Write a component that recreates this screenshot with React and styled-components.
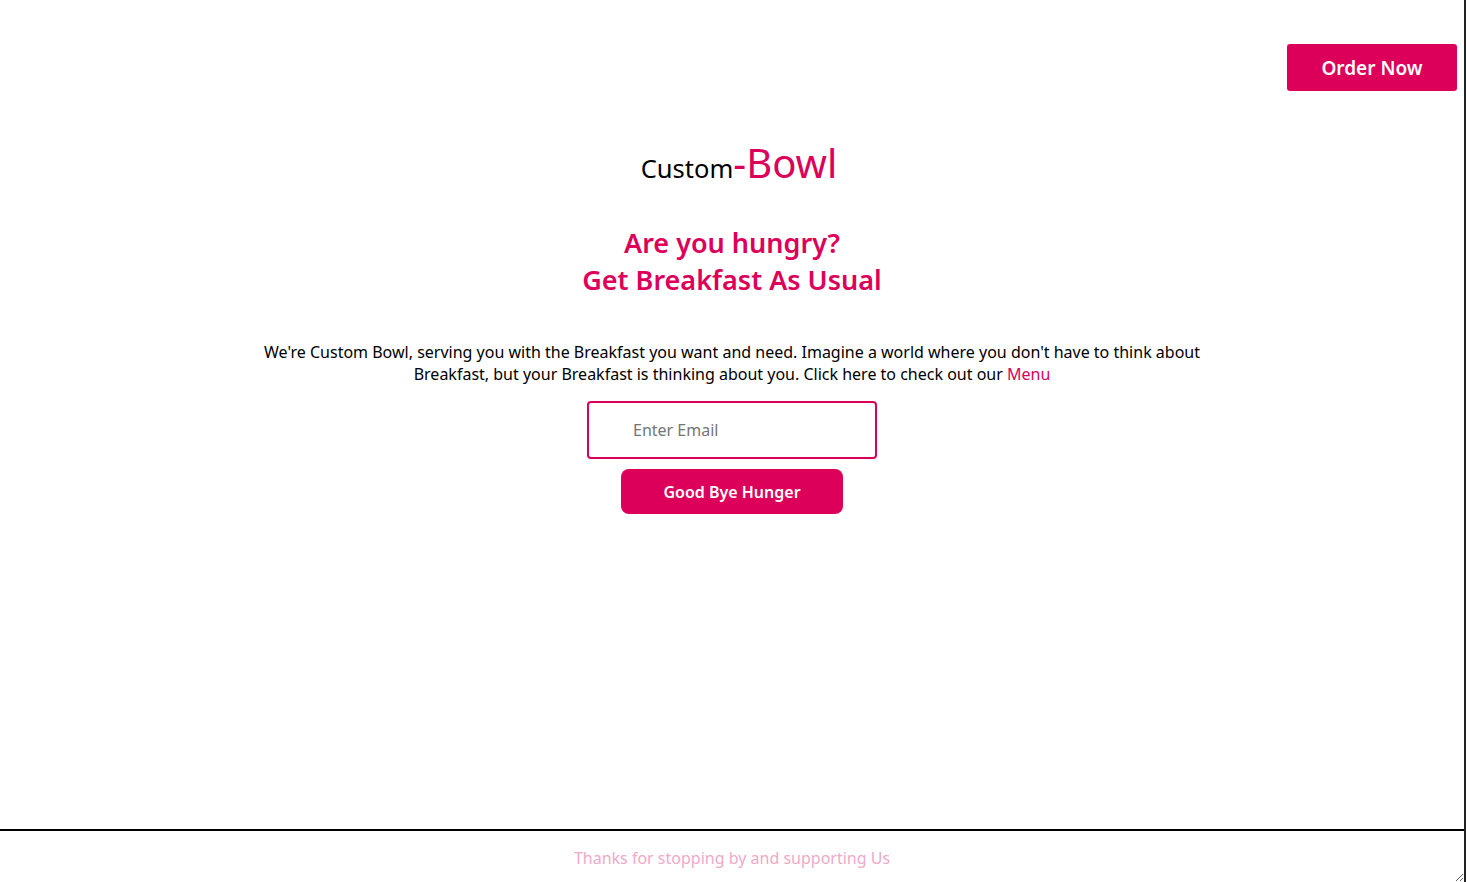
import React from "react";
import styled, { createGlobalStyle } from "styled-components";

const Global = createGlobalStyle`
  html, body { margin: 0; padding: 0; background: #fff; }
  body { font-family: "Noto Sans", "Open Sans", sans-serif; color: #000; }
`;

const PINK = "#dc005a";

const Frame = styled.div`
  width: 1464px;
  height: 882px;
  border-right: 2px solid #222;
  resize: both;
  overflow: hidden;
  display: flex;
  flex-direction: column;
  box-sizing: content-box;
`;

const Main = styled.main`
  flex: 1;
  display: flex;
  flex-direction: column;
  align-items: center;
`;

const TopBar = styled.header`
  align-self: stretch;
  display: flex;
  justify-content: flex-end;
  padding: 44px 7px 0 0;
`;

const OrderButton = styled.button`
  width: 170px;
  height: 47px;
  background: ${PINK};
  color: #fff;
  border: none;
  border-radius: 3px;
  font-family: inherit;
  font-size: 19px;
  font-weight: 600;
  cursor: pointer;
`;

const Logo = styled.h1`
  margin: 52px 0 0;
  padding-left: 14px;
  font-weight: 400;
  line-height: 1;
  display: flex;
  align-items: baseline;
`;

const LogoPart = styled.span`
  font-size: ${(p) => p.$size}px;
  color: ${(p) => p.$color};
`;

const Headline = styled.h2`
  margin: 41px 0 0;
  color: ${PINK};
  font-size: 27px;
  font-weight: 600;
  line-height: 37px;
  text-align: center;
`;

const Intro = styled.p`
  margin: 43px 0 0;
  width: 960px;
  font-size: 16px;
  line-height: 22px;
  text-align: center;
`;

const MenuLink = styled.a`
  color: ${PINK};
  text-decoration: none;
`;

const Form = styled.form`
  margin-top: 16px;
  display: flex;
  flex-direction: column;
  align-items: center;
  gap: 10px;
`;

const EmailInput = styled.input`
  width: 290px;
  height: 58px;
  box-sizing: border-box;
  border: 2px solid ${PINK};
  border-radius: 4px;
  padding: 0 0 0 44px;
  font-family: inherit;
  font-size: 16px;
  outline: none;
  &::placeholder { color: #757575; }
`;

const SubmitButton = styled.button`
  width: 222px;
  height: 45px;
  background: ${PINK};
  color: #fff;
  border: none;
  border-radius: 8px;
  font-family: inherit;
  font-size: 16px;
  font-weight: 600;
  cursor: pointer;
`;

const Footer = styled.footer`
  border-top: 2px solid #000;
  height: 53px;
  display: flex;
  justify-content: center;
  padding-top: 16px;
  box-sizing: border-box;
  color: #eeaac8;
  font-size: 16px;
  line-height: 22px;
`;

export default function App() {
  return (
    <>
      <Global />
      <Frame>
        <Main>
          <TopBar>
            <OrderButton>Order Now</OrderButton>
          </TopBar>
          <Logo>
            <LogoPart $size={25.5} $color="#000">Custom</LogoPart>
            <LogoPart $size={40} $color={PINK}>-Bowl</LogoPart>
          </Logo>
          <Headline>
            Are you hungry?
            <br />
            Get Breakfast As Usual
          </Headline>
          <Intro>
            We're Custom Bowl, serving you with the Breakfast you want and need. Imagine a world where you don't have to think about Breakfast, but your Breakfast is thinking about you. Click here to check out our{" "}
            <MenuLink href="#">Menu</MenuLink>
          </Intro>
          <Form onSubmit={(e) => e.preventDefault()}>
            <EmailInput type="email" placeholder="Enter Email" />
            <SubmitButton type="submit">Good Bye Hunger</SubmitButton>
          </Form>
        </Main>
        <Footer>Thanks for stopping by and supporting Us</Footer>
      </Frame>
    </>
  );
}
